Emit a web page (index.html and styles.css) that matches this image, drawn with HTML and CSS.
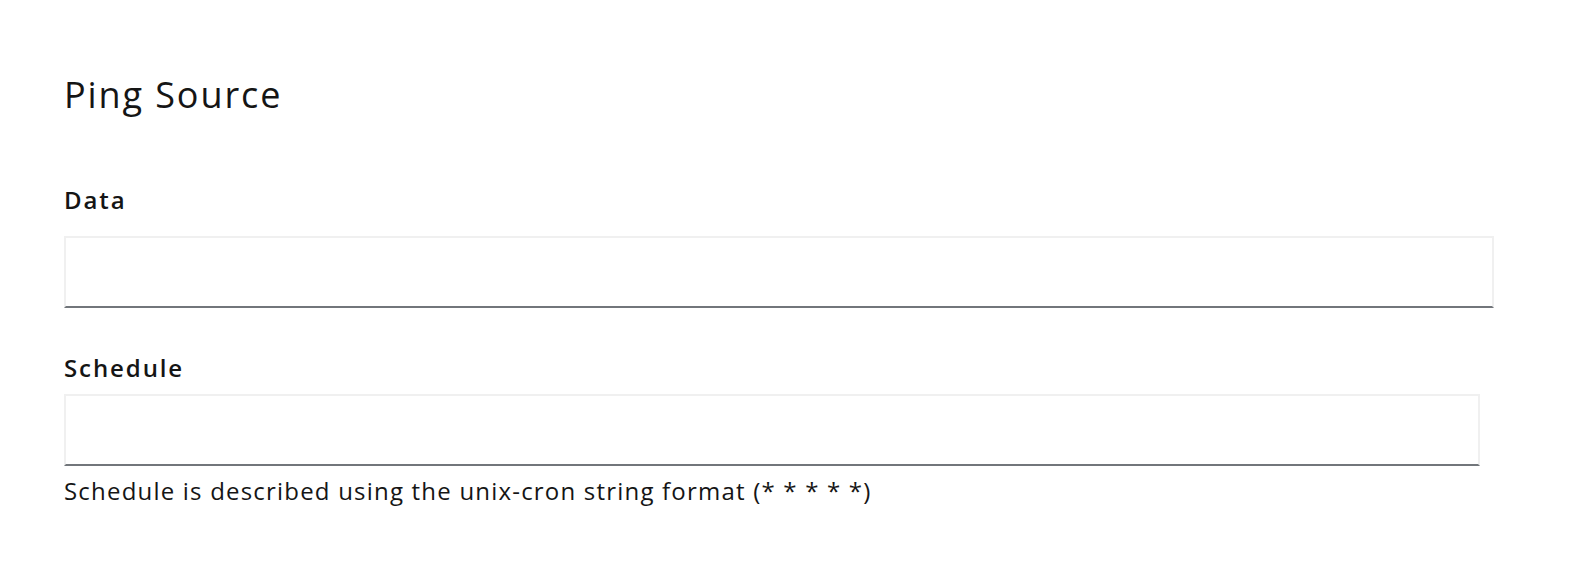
FILE: index.html
```html
<!DOCTYPE html>
<html>
<head>
<meta charset="utf-8">
<link rel="stylesheet" href="styles.css">
</head>
<body>
<div class="page">
  <h2 class="title">Ping Source</h2>
  <div class="field field-data">
    <label class="label" for="data">Data</label>
    <input class="control control-data" id="data" type="text">
  </div>
  <div class="field field-schedule">
    <label class="label" for="schedule">Schedule</label>
    <input class="control control-schedule" id="schedule" type="text">
    <div class="help">Schedule is described using the unix-cron string format (* * * * *)</div>
  </div>
</div>
</body>
</html>
```

FILE: styles.css
```css
html, body {
  margin: 0;
  padding: 0;
  background: #ffffff;
}
.page {
  display: flex;
  flex-direction: column;
  padding: 73px 0 0 64px;
  font-family: "Open Sans", "Noto Sans", sans-serif;
  color: #151515;
}
.title {
  margin: 0;
  font-size: 36px;
  line-height: 44px;
  font-weight: 400;
  letter-spacing: 1.9px;
}
.field {
  display: flex;
  flex-direction: column;
}
.field-data {
  margin-top: 67px;
}
.field-schedule {
  margin-top: 44px;
}
.label {
  font-size: 24px;
  line-height: 32px;
  font-weight: 600;
  letter-spacing: 1.9px;
}
.control {
  box-sizing: border-box;
  height: 72px;
  border: 2px solid #f0f0f0;
  border-bottom-color: #72767b;
  background: #fff;
  padding: 0 16px;
  font-family: inherit;
  font-size: 24px;
  outline: none;
}
.control-data {
  margin-top: 20px;
  width: 1430px;
}
.control-schedule {
  margin-top: 10px;
  width: 1416px;
}
.help {
  margin-top: 9px;
  font-size: 24px;
  line-height: 32px;
  letter-spacing: 1.2px;
}
```
